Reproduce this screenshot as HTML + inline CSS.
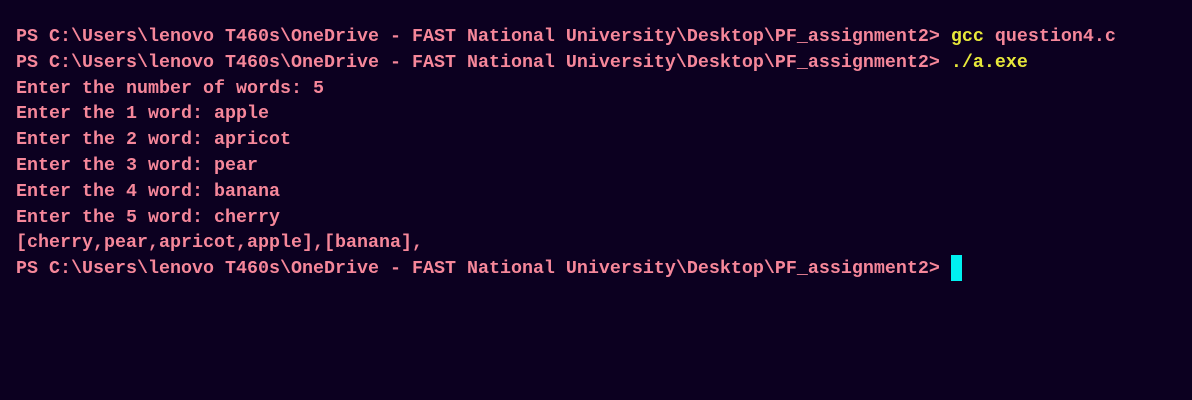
<!DOCTYPE html>
<html><head><style>
html,body{margin:0;padding:0;background:#0c0020;width:1192px;height:400px;overflow:hidden}
pre{margin:0;position:absolute;left:16px;top:24px;font-family:"Liberation Mono",monospace;font-size:18.33px;line-height:25.8px;color:#f6879a;font-weight:bold}
.y{color:#e8e83a}
.c{position:absolute;left:951px;top:255px;width:11px;height:26px;background:#00f0f0}
</style></head><body>
<pre>PS C:\Users\lenovo T460s\OneDrive - FAST National University\Desktop\PF_assignment2&gt; <span class="y">gcc</span> question4.c
PS C:\Users\lenovo T460s\OneDrive - FAST National University\Desktop\PF_assignment2&gt; <span class="y">./a.exe</span>
Enter the number of words: 5
Enter the 1 word: apple
Enter the 2 word: apricot
Enter the 3 word: pear
Enter the 4 word: banana
Enter the 5 word: cherry
[cherry,pear,apricot,apple],[banana],
PS C:\Users\lenovo T460s\OneDrive - FAST National University\Desktop\PF_assignment2&gt; </pre>
<div class="c"></div>
</body></html>
